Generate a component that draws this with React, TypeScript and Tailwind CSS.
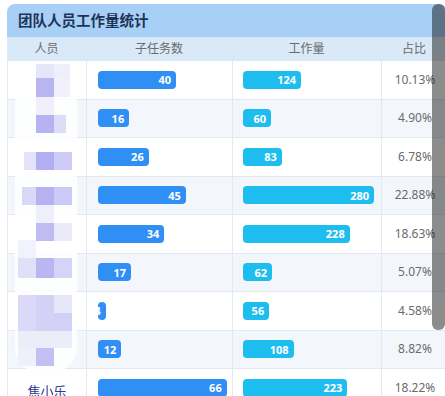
import React from 'react';

const rows = [
  { name: '', sub: 40, work: 124, pct: '10.13%' },
  { name: '', sub: 16, work: 60, pct: '4.90%' },
  { name: '', sub: 26, work: 83, pct: '6.78%' },
  { name: '', sub: 45, work: 280, pct: '22.88%' },
  { name: '', sub: 34, work: 228, pct: '18.63%' },
  { name: '', sub: 17, work: 62, pct: '5.07%' },
  { name: '', sub: 4, work: 56, pct: '4.58%' },
  { name: '', sub: 12, work: 108, pct: '8.82%' },
  { name: '焦小乐', sub: 66, work: 223, pct: '18.22%' },
];

// pixelated name mask: [x, y, w, h, colour] relative to page
const mosaic: [number, number, number, number, string][] = [
  [36, 64, 18, 14, '#e6e5fa'],
  [54, 64, 16, 14, '#efeffb'],
  [36, 78, 18, 19, '#b9b5f1'],
  [54, 78, 16, 19, '#f1f1fb'],
  [36, 97, 18, 18, '#f0effb'],
  [36, 115, 18, 18, '#b7b3f2'],
  [54, 115, 12, 18, '#dedcf7'],
  [24, 152, 12, 18, '#e4e3f9'],
  [36, 152, 18, 18, '#b2aef2'],
  [54, 152, 18, 18, '#cecbf6'],
  [22, 187, 14, 18, '#d9d8f7'],
  [36, 187, 18, 18, '#b6b2f2'],
  [54, 187, 18, 18, '#cbc9f5'],
  [36, 205, 18, 18, '#efeefb'],
  [36, 223, 18, 18, '#c0bcf2'],
  [54, 223, 18, 18, '#eaeafa'],
  [18, 240, 18, 18, '#f2f2fc'],
  [18, 258, 18, 20, '#e0e0f8'],
  [36, 258, 18, 20, '#bab6f2'],
  [54, 258, 18, 20, '#d5d4f6'],
  [18, 295, 18, 36, '#dbd9f7'],
  [36, 295, 18, 36, '#d3d1f6'],
  [54, 295, 18, 18, '#e7e7f9'],
  [54, 313, 18, 18, '#d1d0f5'],
  [18, 331, 54, 17, '#ededfa'],
  [18, 348, 18, 18, '#f0f0fb'],
  [36, 348, 18, 18, '#c3bff3'],
];

const cols = 'grid grid-cols-[79px_146px_149px_66px]';

export default function App() {
  return (
    <div
      className="relative w-[445px] h-[396px] overflow-hidden bg-white"
      style={{ fontFamily: '"Noto Sans", "Noto Sans CJK SC", sans-serif' }}
    >
      <div className="ml-[7px] mt-[4px] w-[440px]">
        <div className="h-[33px] bg-[#a8d0f6] rounded-t-[8px] pl-[11px] flex items-center text-[14.5px] font-bold text-[#1d3458]">
          团队人员工作量统计
        </div>
        <div className={`${cols} h-[24px] bg-[#dae9f8] text-[12px] text-[#6b6b6b] items-center text-center`}>
          <div>人员</div>
          <div>子任务数</div>
          <div>工作量</div>
          <div>占比</div>
        </div>
        <div className="border-l border-[#e3e9f0]">
          {rows.map((r, i) => (
            <div
              key={i}
              className={`${cols} h-[38.5px] border-b border-[#e3e9f0] ${i % 2 === 1 ? 'bg-[#f3f7fb]' : 'bg-white'}`}
            >
              <div className="border-r border-[#e3e9f0] flex items-center justify-center pt-[8px] text-[13px] text-[#2b3990]">
                {r.name}
              </div>
              <div className="border-r border-[#e3e9f0] flex items-center pl-[11px]">
                <div
                  className="h-[18px] rounded-[4px] bg-[#2f8ff4] overflow-hidden flex items-center justify-end pr-[5px] text-[11px] font-bold text-white leading-none"
                  style={{ width: r.sub * 1.95 }}
                >
                  {r.sub}
                </div>
              </div>
              <div className="border-r border-[#e3e9f0] flex items-center pl-[10px]">
                <div
                  className="h-[18px] rounded-[4px] bg-[#1dbdf0] overflow-hidden flex items-center justify-end pr-[5px] text-[11px] font-bold text-white leading-none"
                  style={{ width: r.work * 0.468 }}
                >
                  {r.work}
                </div>
              </div>
              <div className="flex items-center justify-center text-[12px] text-[#6b6b6b]">{r.pct}</div>
            </div>
          ))}
        </div>
      </div>

      {/* blurred names */}
      <div className="absolute left-[15px] top-[62px] w-[62px] h-[310px] rounded-[24px] bg-white/85" />
      {mosaic.map(([x, y, w, h, c], i) => (
        <div key={i} className="absolute" style={{ left: x, top: y, width: w, height: h, background: c }} />
      ))}

      {/* overlay scrollbar */}
      <div className="absolute right-0 top-[4px] w-[13px] h-[326px] rounded-[6px] bg-black/45" />
    </div>
  );
}
